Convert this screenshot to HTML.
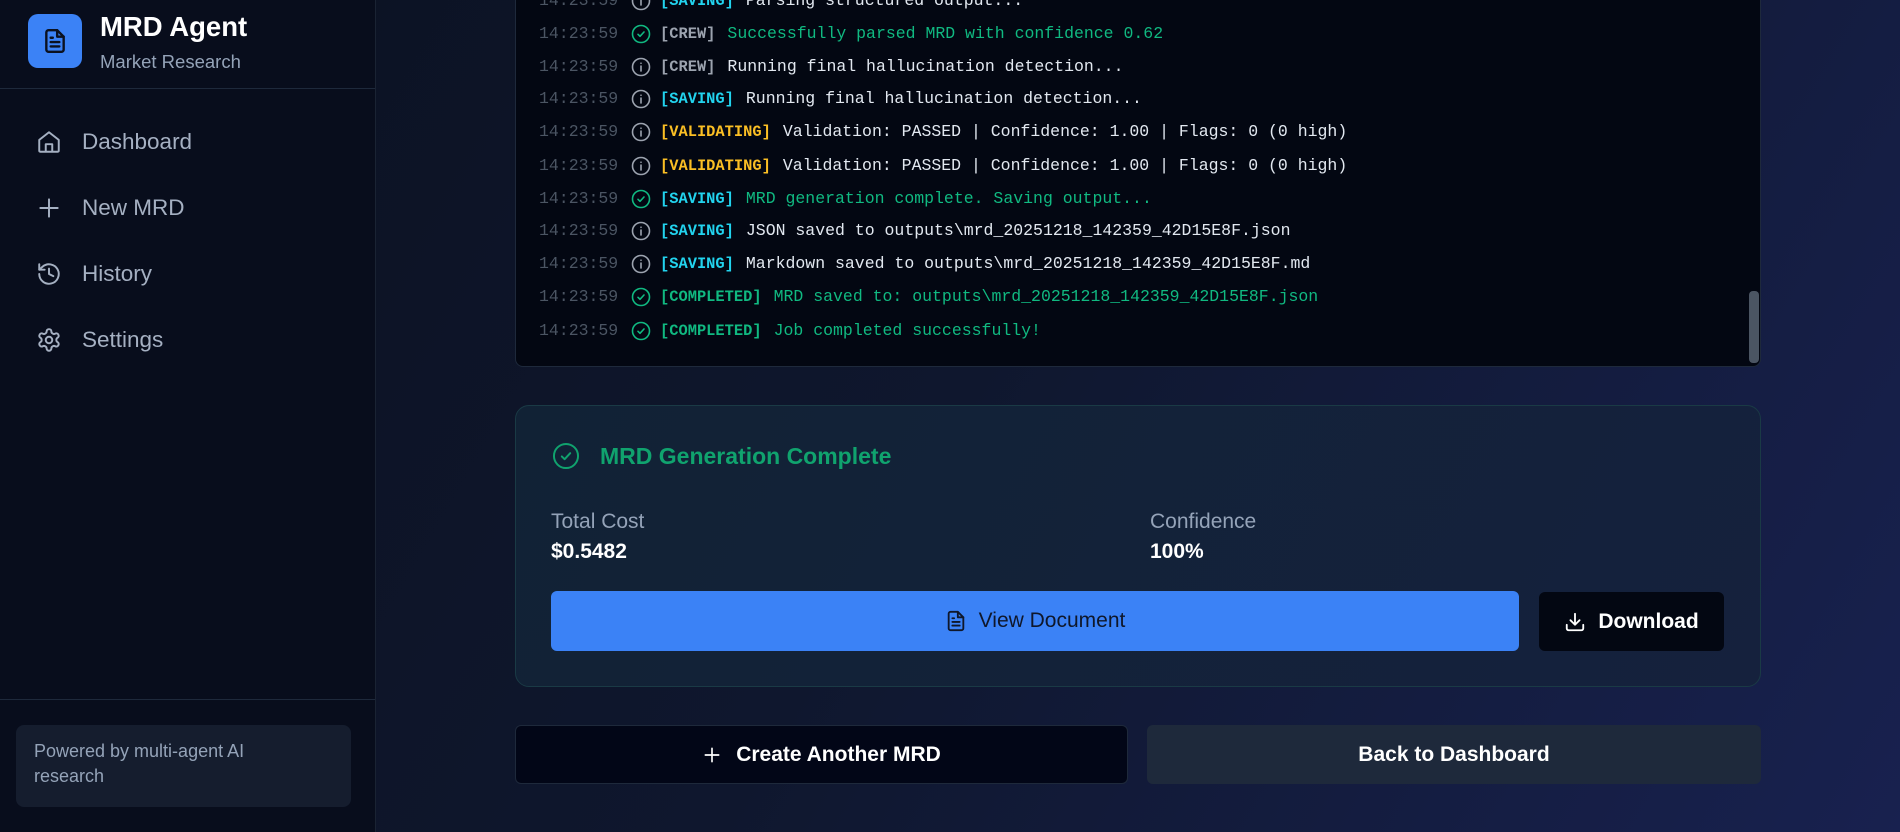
<!DOCTYPE html>
<html><head><meta charset="utf-8"><style>
*{box-sizing:border-box;margin:0;padding:0}
body{width:1900px;height:832px;overflow:hidden;font-family:"Liberation Sans",sans-serif;background:linear-gradient(120deg,#0b1120 0%,#0f172e 50%,#18214f 100%);position:relative;color:#e2e8f0}
.side{position:absolute;left:0;top:0;width:376px;height:832px;background:#080d1c;border-right:1px solid #1a2333}
.logo{position:absolute;left:28px;top:14px;width:54px;height:54px;background:#3b82f6;border-radius:10px;display:flex;align-items:center;justify-content:center}
.t1{position:absolute;left:100px;top:11px;font-size:27.5px;font-weight:bold;color:#fff}
.t2{position:absolute;left:100px;top:51px;font-size:18.5px;color:#94a3b8}
.hr{position:absolute;left:0;top:88px;width:375px;height:1px;background:#1e293b}
.nav{position:absolute;left:36px;display:flex;align-items:center;font-size:22.5px;color:#a5b0c2}
.nav svg{margin-right:20px}
.foot{position:absolute;left:0;top:699px;width:375px;height:1px;background:#1e293b}
.fbox{position:absolute;left:16px;top:725px;width:335px;height:82px;background:#151d2e;border-radius:8px;padding:14px 60px 14px 18px;font-size:18px;color:#94a3b8;line-height:25px}
.log{position:absolute;left:515px;top:-10px;width:1246px;height:377px;background:#030712;border:1px solid #1e293b;border-radius:8px}
.row{position:absolute;left:539px;height:33px;display:flex;align-items:center;font-family:"Liberation Mono",monospace;font-size:16.5px;white-space:pre;color:#e2e8f0}
.tm{color:#4b5563;width:92px}
.row svg{margin-right:9px}
.tag{font-weight:bold;font-size:15.4px;margin-right:12px}
.c{color:#22d3ee}.y{color:#fbbf24}.g{color:#10b981}.gr{color:#9ca3af}
.sb{position:absolute;left:1749px;top:291px;width:10px;height:72px;background:#4b5563;border-radius:4px}
.card{position:absolute;left:515px;top:405px;width:1246px;height:282px;background:linear-gradient(120deg,#112235,#15213d);border:1px solid #1a3a45;border-radius:14px}
.btn{position:absolute;display:flex;align-items:center;justify-content:center;font-size:21px;border-radius:6px}
</style></head><body>
<div class="side">
<div class="logo"><svg width="26" height="26" viewBox="0 0 24 24" fill="none" stroke="#0b1120" stroke-width="2.2" stroke-linecap="round" stroke-linejoin="round"><path d="M14 2H6a2 2 0 0 0-2 2v16a2 2 0 0 0 2 2h12a2 2 0 0 0 2-2V8z"/><path d="M14 2v6h6M8 13h8M8 17h8M8 9h2"/></svg></div>
<div class="t1">MRD Agent</div><div class="t2">Market Research</div>
<div class="hr"></div>
<div class="nav" style="top:129px"><svg width="26" height="26" viewBox="0 0 24 24" fill="none" stroke="#a5b0c2" stroke-width="1.8" stroke-linejoin="round"><path d="M3 10l9-7 9 7v10a1 1 0 0 1-1 1H4a1 1 0 0 1-1-1z"/><path d="M9 21v-7h6v7"/></svg>Dashboard</div>
<div class="nav" style="top:195px"><svg width="26" height="26" viewBox="0 0 24 24" fill="none" stroke="#a5b0c2" stroke-width="1.8" stroke-linecap="round"><path d="M12 4v16M4 12h16"/></svg>New MRD</div>
<div class="nav" style="top:261px"><svg width="26" height="26" viewBox="0 0 24 24" fill="none" stroke="#a5b0c2" stroke-width="1.8" stroke-linecap="round" stroke-linejoin="round"><path d="M3 12a9 9 0 1 0 3-6.7L3 8"/><path d="M3 3v5h5M12 7v5l4 2"/></svg>History</div>
<div class="nav" style="top:327px"><svg width="26" height="26" viewBox="0 0 24 24" fill="none" stroke="#a5b0c2" stroke-width="1.8" stroke-linejoin="round"><path d="M12.2 2h-.4a2 2 0 0 0-2 2v.2a2 2 0 0 1-1 1.7l-.4.3a2 2 0 0 1-2 0l-.2-.1a2 2 0 0 0-2.7.7l-.2.4a2 2 0 0 0 .7 2.7l.2.1a2 2 0 0 1 1 1.7v.5a2 2 0 0 1-1 1.7l-.2.1a2 2 0 0 0-.7 2.7l.2.4a2 2 0 0 0 2.7.7l.2-.1a2 2 0 0 1 2 0l.4.3a2 2 0 0 1 1 1.7v.2a2 2 0 0 0 2 2h.4a2 2 0 0 0 2-2v-.2a2 2 0 0 1 1-1.7l.4-.3a2 2 0 0 1 2 0l.2.1a2 2 0 0 0 2.7-.7l.2-.4a2 2 0 0 0-.7-2.7l-.2-.1a2 2 0 0 1-1-1.7v-.5a2 2 0 0 1 1-1.7l.2-.1a2 2 0 0 0 .7-2.7l-.2-.4a2 2 0 0 0-2.7-.7l-.2.1a2 2 0 0 1-2 0l-.4-.3a2 2 0 0 1-1-1.7V4a2 2 0 0 0-2-2z"/><circle cx="12" cy="12" r="3"/></svg>Settings</div>
<div class="foot"></div>
<div class="fbox">Powered by multi-agent AI research</div>
</div>

<div class="log"></div>
<div class="sb"></div>

<svg width="0" height="0" style="position:absolute"><defs>
<symbol id="i" viewBox="0 0 20 20"><circle cx="10" cy="10" r="8.5" fill="none" stroke="#9ca3af" stroke-width="1.6"/><path d="M10 9v5M10 6.2v.1" stroke="#9ca3af" stroke-width="1.6" stroke-linecap="round"/></symbol>
<symbol id="k" viewBox="0 0 20 20"><circle cx="10" cy="10" r="8.5" fill="none" stroke="#10b981" stroke-width="1.6"/><path d="M7 10.3l2 2 4-4.3" fill="none" stroke="#10b981" stroke-width="1.6" stroke-linecap="round" stroke-linejoin="round"/></symbol>
</defs></svg>

<div class="row" style="top:-16px"><span class="tm">14:23:59</span><svg width="20" height="20"><use href="#i"/></svg><span class="tag c">[SAVING]</span>Parsing structured output...</div>
<div class="row" style="top:17px"><span class="tm">14:23:59</span><svg width="20" height="20"><use href="#k"/></svg><span class="tag gr">[CREW]</span><span class="g">Successfully parsed MRD with confidence 0.62</span></div>
<div class="row" style="top:50px"><span class="tm">14:23:59</span><svg width="20" height="20"><use href="#i"/></svg><span class="tag gr">[CREW]</span>Running final hallucination detection...</div>
<div class="row" style="top:82px"><span class="tm">14:23:59</span><svg width="20" height="20"><use href="#i"/></svg><span class="tag c">[SAVING]</span>Running final hallucination detection...</div>
<div class="row" style="top:115px"><span class="tm">14:23:59</span><svg width="20" height="20"><use href="#i"/></svg><span class="tag y">[VALIDATING]</span>Validation: PASSED | Confidence: 1.00 | Flags: 0 (0 high)</div>
<div class="row" style="top:149px"><span class="tm">14:23:59</span><svg width="20" height="20"><use href="#i"/></svg><span class="tag y">[VALIDATING]</span>Validation: PASSED | Confidence: 1.00 | Flags: 0 (0 high)</div>
<div class="row" style="top:182px"><span class="tm">14:23:59</span><svg width="20" height="20"><use href="#k"/></svg><span class="tag c">[SAVING]</span><span class="g">MRD generation complete. Saving output...</span></div>
<div class="row" style="top:214px"><span class="tm">14:23:59</span><svg width="20" height="20"><use href="#i"/></svg><span class="tag c">[SAVING]</span>JSON saved to outputs\mrd_20251218_142359_42D15E8F.json</div>
<div class="row" style="top:247px"><span class="tm">14:23:59</span><svg width="20" height="20"><use href="#i"/></svg><span class="tag c">[SAVING]</span>Markdown saved to outputs\mrd_20251218_142359_42D15E8F.md</div>
<div class="row" style="top:280px"><span class="tm">14:23:59</span><svg width="20" height="20"><use href="#k"/></svg><span class="tag g">[COMPLETED]</span><span class="g">MRD saved to: outputs\mrd_20251218_142359_42D15E8F.json</span></div>
<div class="row" style="top:314px"><span class="tm">14:23:59</span><svg width="20" height="20"><use href="#k"/></svg><span class="tag g">[COMPLETED]</span><span class="g">Job completed successfully!</span></div>

<div class="card"></div>
<svg style="position:absolute;left:552px;top:442px" width="28" height="28" viewBox="0 0 20 20"><circle cx="10" cy="10" r="8.6" fill="none" stroke="#10a36e" stroke-width="1.4"/><path d="M7 10.3l2 2 4-4.3" fill="none" stroke="#10a36e" stroke-width="1.4" stroke-linecap="round" stroke-linejoin="round"/></svg>
<div style="position:absolute;left:600px;top:443px;font-size:23px;font-weight:bold;color:#10a36e">MRD Generation Complete</div>
<div style="position:absolute;left:551px;top:510px;font-size:21px;color:#94a3b8">Total Cost</div>
<div style="position:absolute;left:551px;top:540px;font-size:21px;font-weight:bold;color:#fff">$0.5482</div>
<div style="position:absolute;left:1150px;top:510px;font-size:21px;color:#94a3b8">Confidence</div>
<div style="position:absolute;left:1150px;top:540px;font-size:21px;font-weight:bold;color:#fff">100%</div>
<div class="btn" style="left:551px;top:591px;width:968px;height:60px;background:#3b82f6;color:#0f172a"><svg width="22" height="22" viewBox="0 0 24 24" fill="none" stroke="#0f172a" stroke-width="2" stroke-linecap="round" stroke-linejoin="round" style="margin-right:12px"><path d="M14 2H6a2 2 0 0 0-2 2v16a2 2 0 0 0 2 2h12a2 2 0 0 0 2-2V8z"/><path d="M14 2v6h6M8 13h8M8 17h8M8 9h2"/></svg>View Document</div>
<div class="btn" style="left:1539px;top:592px;width:185px;height:59px;background:#030712;color:#fff;font-weight:bold"><svg width="22" height="22" viewBox="0 0 24 24" fill="none" stroke="#fff" stroke-width="2" stroke-linecap="round" stroke-linejoin="round" style="margin-right:12px"><path d="M21 15v4a2 2 0 0 1-2 2H5a2 2 0 0 1-2-2v-4M7 10l5 5 5-5M12 15V3"/></svg>Download</div>
<div class="btn" style="left:515px;top:725px;width:613px;height:59px;background:#020617;border:1px solid #1e293b;color:#fff;font-weight:bold"><svg width="20" height="20" viewBox="0 0 24 24" fill="none" stroke="#fff" stroke-width="2" stroke-linecap="round" style="margin-right:14px"><path d="M12 4v16M4 12h16"/></svg>Create Another MRD</div>
<div class="btn" style="left:1147px;top:725px;width:614px;height:59px;background:#1e293b;color:#fff;font-weight:bold">Back to Dashboard</div>
</body></html>
